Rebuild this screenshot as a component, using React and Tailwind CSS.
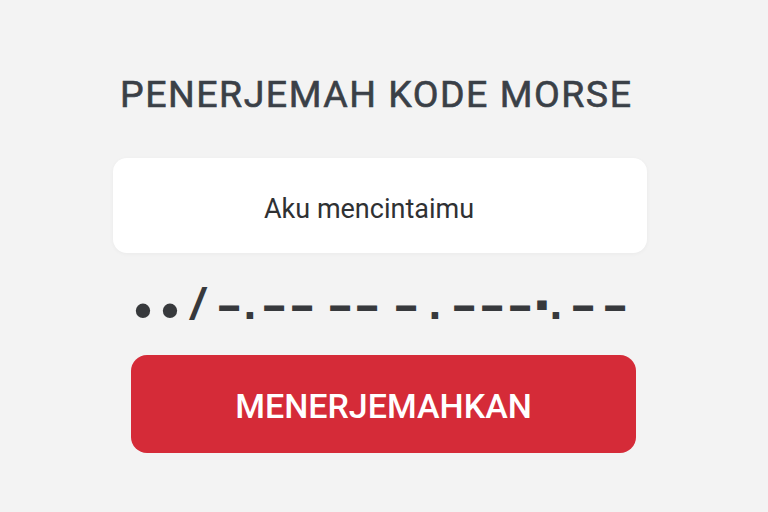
// Morse glyphs for "i / love you" style output, each with its own spacing
const DOT = "font-['Liberation_Sans',sans-serif] font-bold text-[50px] translate-y-[8px]";
const SMALL = "font-['Liberation_Sans',sans-serif] font-bold text-[46px]";
const DASH = "font-['DejaVu_Sans_Mono',monospace] text-[32px]";
const SLASH = "font-['Liberation_Sans',sans-serif] font-bold text-[44px] -skew-x-12";
const SQUARE = "font-['DejaVu_Sans',sans-serif] text-[19px] -translate-y-[9px]";

const morse = [
  { ch: '•', cls: DOT, ml: '' },
  { ch: '•', cls: DOT, ml: 'ml-[7px]' },
  { ch: '/', cls: SLASH, ml: 'ml-[8px]' },
  { ch: '━', cls: DASH, ml: 'ml-[11px]' },
  { ch: '.', cls: SMALL, ml: 'ml-[1px]' },
  { ch: '━', cls: DASH, ml: 'ml-[4px]' },
  { ch: '━', cls: DASH, ml: 'ml-[8px]' },
  { ch: '━', cls: DASH, ml: 'ml-[18px]' },
  { ch: '━', cls: DASH, ml: 'ml-[7px]' },
  { ch: '━', cls: DASH, ml: 'ml-[19px]' },
  { ch: '.', cls: SMALL, ml: 'ml-[9px]' },
  { ch: '━', cls: DASH, ml: 'ml-[9px]' },
  { ch: '━', cls: DASH, ml: 'ml-[8px]' },
  { ch: '━', cls: DASH, ml: 'ml-[8px]' },
  { ch: '▪', cls: SQUARE, ml: 'ml-[2px]' },
  { ch: '.', cls: SMALL, ml: '-ml-[6px]' },
  { ch: '━', cls: DASH, ml: 'ml-[7px]' },
  { ch: '━', cls: DASH, ml: 'ml-[12px]' },
];

function MorseLine() {
  return (
    <div className="flex items-baseline pl-[133px] text-[#37393c] leading-none">
      {morse.map((m, i) => (
        <span key={i} className={`w-[20px] flex justify-center ${m.ml} ${m.cls}`}>
          {m.ch}
        </span>
      ))}
    </div>
  );
}

export default function App() {
  return (
    <div className="w-[768px] h-[512px] bg-[#f3f3f3] font-['Roboto',sans-serif] flex flex-col">
      <h1 className="mt-[72px] pl-[120px] text-[37.5px] leading-[44px] font-normal text-[#3a4047] tracking-[1.5px] whitespace-nowrap [-webkit-text-stroke:0.6px_#3a4047]">
        PENERJEMAH KODE MORSE
      </h1>
      <div className="mt-[42px] ml-[113px] w-[534px] h-[95px] bg-white rounded-[14px] shadow-[0_1px_4px_rgba(0,0,0,0.04)] flex items-center pl-[151px]">
        <span className="text-[27px] text-[#2f3133] mt-[7px]">Aku mencintaimu</span>
      </div>
      <div className="mt-[24px] h-[44px]">
        <MorseLine />
      </div>
      <button className="mt-[34px] ml-[131px] w-[505px] h-[98px] rounded-[16px] bg-[#d52b38] text-white text-[34px] font-medium flex items-center justify-center">
        <span className="mt-[5px]">MENERJEMAHKAN</span>
      </button>
    </div>
  );
}
